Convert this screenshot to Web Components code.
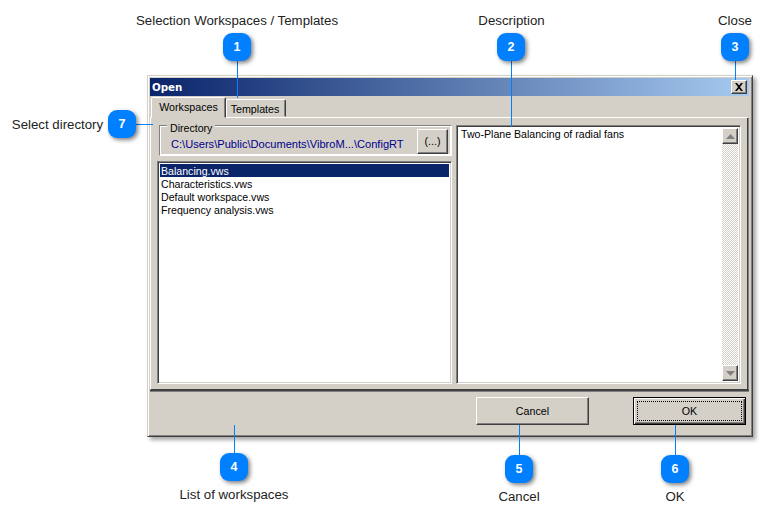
<!DOCTYPE html>
<html><head><meta charset="utf-8"><title>Open</title>
<style>html,body{margin:0;padding:0;background:#fff}body{width:768px;height:520px;overflow:hidden;position:relative}</style>
</head><body>
<x-window>
  <x-titlebar slot="title">Open</x-titlebar>
  <x-tabs slot="tabs"></x-tabs>
  <x-group slot="group" label="Directory" path="C:\Users\Public\Documents\VibroM...\ConfigRT"></x-group>
  <x-list slot="list"><div>Balancing.vws</div><div>Characteristics.vws</div><div>Default workspace.vws</div><div>Frequency analysis.vws</div></x-list>
  <x-memo slot="memo">Two-Plane Balancing of radial fans</x-memo>
  <x-btn slot="cancel">Cancel</x-btn>
  <x-btn slot="ok" default>OK</x-btn>
</x-window>
<x-callout n="1" label="Selection Workspaces / Templates" x="223" y="33" dir="down" len="37" lx="237" ly="21"></x-callout>
<x-callout n="2" label="Description" x="497" y="33" dir="down" len="66" lx="511.5" ly="21"></x-callout>
<x-callout n="3" label="Close" x="721" y="33" dir="down" len="19" lx="735" ly="21"></x-callout>
<x-callout n="4" label="List of workspaces" x="220" y="453" dir="up" len="28" lx="234" ly="495"></x-callout>
<x-callout n="5" label="Cancel" x="505" y="455" dir="up" len="30" lx="519" ly="497"></x-callout>
<x-callout n="6" label="OK" x="661" y="455" dir="up" len="30" lx="675" ly="497"></x-callout>
<x-callout n="7" label="Select directory" x="108" y="110" dir="right" len="17" lx="57.5" ly="125"></x-callout>
<script>
const FONT='"Liberation Sans",Arial,sans-serif';
function def(name,css,html,init){
  customElements.define(name,class extends HTMLElement{
    connectedCallback(){
      if(this.shadowRoot)return;
      const r=this.attachShadow({mode:'open'});
      r.innerHTML='<style>'+css+'</style>'+(typeof html==='function'?html(this):html);
      if(init)init(this,r);
    }
  });
}
const raised='border:1px solid;border-color:#fff #404040 #404040 #fff;box-shadow:inset -1px -1px 0 #808080;';
const sunken='border:1px solid;border-color:#808080 #fff #fff #808080;box-shadow:inset 1px 1px 0 #404040,inset -1px -1px 0 #d4d0c8;';
def('x-window',`
:host{display:block;position:absolute;left:147px;top:75px;width:606px;height:362px;box-sizing:border-box;background:#d4d0c8;
 font:10.6px ${FONT};color:#000;
 border:1px solid;border-color:#d4d0c8 #404040 #404040 #d4d0c8;
 box-shadow:inset 1px 1px 0 #fff,inset -1px -1px 0 #808080,3px 3px 4px rgba(0,0,0,.35)}
.in{display:flex;flex-direction:column;height:100%;padding:2px 3px 0 2px;box-sizing:border-box}
.tabs{height:21px;flex:none}
.page{flex:none;height:273px;box-sizing:border-box;border:1px solid;border-color:#fff #808080 #404040 #fff;border-top:1px solid #fff;display:grid;grid-template-columns:296px 1fr;padding:7px 5px 5px 5px;column-gap:4px;box-shadow:inset -1px 0 0 #404040}
.left{display:flex;flex-direction:column;gap:5px;padding-left:1px}
.foot{flex:1;border-top:1px solid #404040;box-shadow:inset 0 1px 0 #808080;display:flex;justify-content:flex-end;align-items:flex-start;gap:44px;padding:6px 3px 0 0}
`,`<div class="in"><slot name="title"></slot><div class="tabs"><slot name="tabs"></slot></div>
<div class="page"><div class="left"><slot name="group"></slot><slot name="list"></slot></div><slot name="memo"></slot></div>
<div class="foot"><slot name="cancel"></slot><slot name="ok"></slot></div></div>`);
def('x-titlebar',`
:host{display:flex;flex:none;height:18px;align-items:center;justify-content:space-between;padding:0 2px 0 2px;background:linear-gradient(90deg,#0a246a,#a6caf0);color:#fff;font:bold 10.3px "DejaVu Sans",Verdana,sans-serif}
.x{width:16px;height:14px;box-sizing:border-box;background:#d4d0c8;${raised}display:flex;align-items:center;justify-content:center}
svg{display:block}`,
t=>`<span><slot></slot></span><div class="x"><svg width="10" height="8" viewBox="0 0 10 8"><path d="M1 0h2l2 2.500 2-2.500h2l-3 4 3 4h-2l-2-2.500-2 2.500h-2l3-4z" fill="#000"/></svg></div>`);
def('x-tabs',`
:host{display:flex;align-items:flex-end;height:21px;padding-left:1px;position:relative;font:10.7px ${FONT}}
.t{box-sizing:border-box;border:1px solid;border-color:#fff #404040 transparent #fff;border-radius:2px 2px 0 0;box-shadow:inset -1px 0 0 #808080;text-align:center}
.a{width:75px;height:21px;line-height:19px;position:relative;top:1px;background:#d4d0c8;z-index:1}
.b{width:60px;height:18px;line-height:18px;padding-right:2px}`,
`<div class="t a">Workspaces</div><div class="t b">Templates</div>`);
def('x-group',`
:host{display:block;flex:none;height:31px;box-sizing:border-box;position:relative;margin-left:2px;width:293px;border:1px solid;border-color:#808080 #fff #fff #808080;outline:1px solid;outline-offset:-2px;outline-color:#fff}
.l{position:absolute;left:7px;top:-4px;background:#d4d0c8;padding:0 3px;line-height:13px}
.row{display:flex;justify-content:space-between;align-items:center;height:100%;padding:2px 3px 0 11px;box-sizing:border-box}
.p{color:#00008b;padding-top:5px;font-size:11.1px}
.b{width:31px;height:25px;box-sizing:border-box;${raised}display:flex;align-items:center;justify-content:center;padding-bottom:2px}`,
h=>`<span class="l"></span><div class="row"><span class="p"></span><div class="b">(...)</div></div>`,
(h,r)=>{r.querySelector('.l').textContent=h.getAttribute('label');r.querySelector('.p').textContent=h.getAttribute('path');});
def('x-list',`
:host{display:block;flex:1;box-sizing:border-box;width:295px;background:#fff;${sunken}padding:2px 2px 2px 2px;line-height:13px}
::slotted(div:first-child){background:#0a246a;color:#fff}
::slotted(div){padding:1px 0 0 1px;height:13px;box-sizing:border-box;line-height:13px}`,`<slot></slot>`);
def('x-memo',`
:host{display:flex;box-sizing:border-box;background:#fff;${sunken}padding:2px 2px 2px 4px;line-height:13px;margin-right:2px}
.txt{flex:1}
.sb{width:16px;flex:none;display:flex;flex-direction:column;background:repeating-conic-gradient(#d4d0c8 0 25%,#fff 0 50%) 0 0/2px 2px}
.s{height:16px;flex:none;box-sizing:border-box;background:#d4d0c8;${raised}display:flex;align-items:center;justify-content:center}
.f{flex:1}`,
`<div class="txt"><slot></slot></div><div class="sb"><div class="s"><svg width="9" height="5"><path d="M4.500 0L9 5H0z" fill="#808080"/></svg></div><div class="f"></div><div class="s"><svg width="9" height="5"><path d="M0 0h9L4.500 5z" fill="#808080"/></svg></div></div>`);
def('x-btn',`
:host{display:flex;width:113px;height:28px;box-sizing:border-box;background:#d4d0c8;${raised}font:10.7px ${FONT};align-items:center;justify-content:center;position:relative}
:host([default]){border-color:#000;box-shadow:inset 1px 1px 0 #fff,inset -1px -1px 0 #404040,inset -2px -2px 0 #808080}
:host([default]) i{position:absolute;inset:3px;border:1px dotted #000}`,
h=>`<slot></slot>${h.hasAttribute('default')?'<i></i>':''}`);
def('x-callout',`
:host{position:absolute;left:var(--x);top:var(--y);width:28px;height:28px;color:#222}
.b{position:absolute;inset:0;border-radius:9px;background:#0080ff;color:#fff;font:bold 12.5px "Liberation Sans",sans-serif;display:flex;align-items:center;justify-content:center;box-shadow:2px 2px 4px rgba(0,0,0,.5)}
.ln{position:absolute;background:#0080ff}
.lb{position:absolute;white-space:nowrap;transform:translate(-50%,-50%);font:13.25px ${FONT};line-height:16px}`,
h=>`<div class="ln"></div><div class="b"></div><div class="lb"></div>`,
(h,r)=>{
  const x=+h.getAttribute('x'),y=+h.getAttribute('y'),len=+h.getAttribute('len'),d=h.getAttribute('dir');
  h.style.setProperty('--x',x+'px');h.style.setProperty('--y',y+'px');
  r.querySelector('.b').textContent=h.getAttribute('n');
  const l=r.querySelector('.lb');l.textContent=h.getAttribute('label');
  l.style.left=(+h.getAttribute('lx')-x)+'px';l.style.top=(+h.getAttribute('ly')-y)+'px';
  const s=r.querySelector('.ln').style;
  if(d==='down'){s.left='14px';s.top='28px';s.width='1px';s.height=len+'px';}
  if(d==='up'){s.left='14px';s.bottom='28px';s.width='1px';s.height=len+'px';}
  if(d==='right'){s.left='28px';s.top='14px';s.height='1px';s.width=len+'px';}
});
</script>
</body></html>
